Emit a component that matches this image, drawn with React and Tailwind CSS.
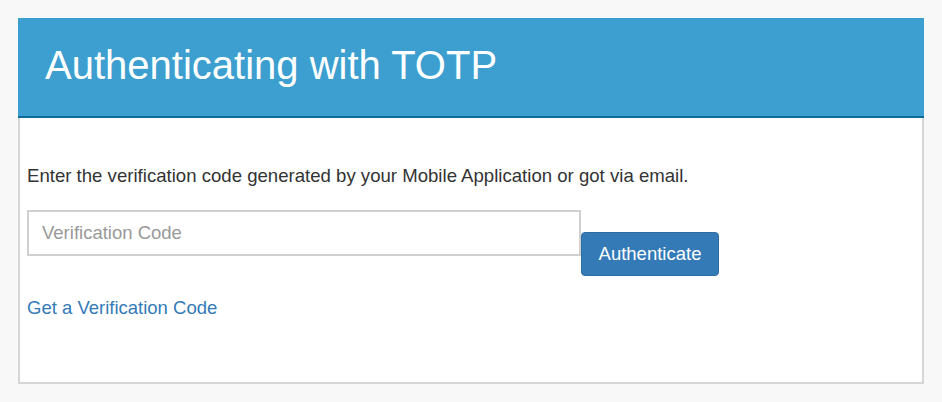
export default function App() {
  return (
    <div className="min-h-[402px] w-full bg-[#f8f8f8] pt-[18px] px-[18px] font-['Liberation_Sans',Arial,sans-serif]">
      <div className="w-[906px]">
        <div className="h-[100px] bg-[#3c9fd0] border-b-2 border-[#0f6a99] flex items-center pl-[27px]">
          <h1 className="text-[40px] leading-none text-white pb-[4px]">Authenticating with TOTP</h1>
        </div>
        <div className="h-[266px] bg-white border-2 border-t-0 border-[#d6d6d6] pl-[7px] pt-[46px]">
          <p className="text-[18.6px] leading-[24px] text-[#333]">
            Enter the verification code generated by your Mobile Application or got via email.
          </p>
          <div className="flex items-start mt-[22px]">
            <input
              type="text"
              placeholder="Verification Code"
              className="w-[554px] h-[46px] border-2 border-[#d0d0d0] px-[13px] text-[18.5px] text-[#333] placeholder:text-[#999] outline-none"
            />
            <button className="mt-[22px] w-[138px] h-[44px] rounded-[4px] bg-[#337ab7] border border-[#2e6da4] text-white text-[18.5px]">
              Authenticate
            </button>
          </div>
          <a href="#" className="block mt-[20px] text-[18.5px] leading-[24px] text-[#337ab7]">
            Get a Verification Code
          </a>
        </div>
      </div>
    </div>
  );
}
